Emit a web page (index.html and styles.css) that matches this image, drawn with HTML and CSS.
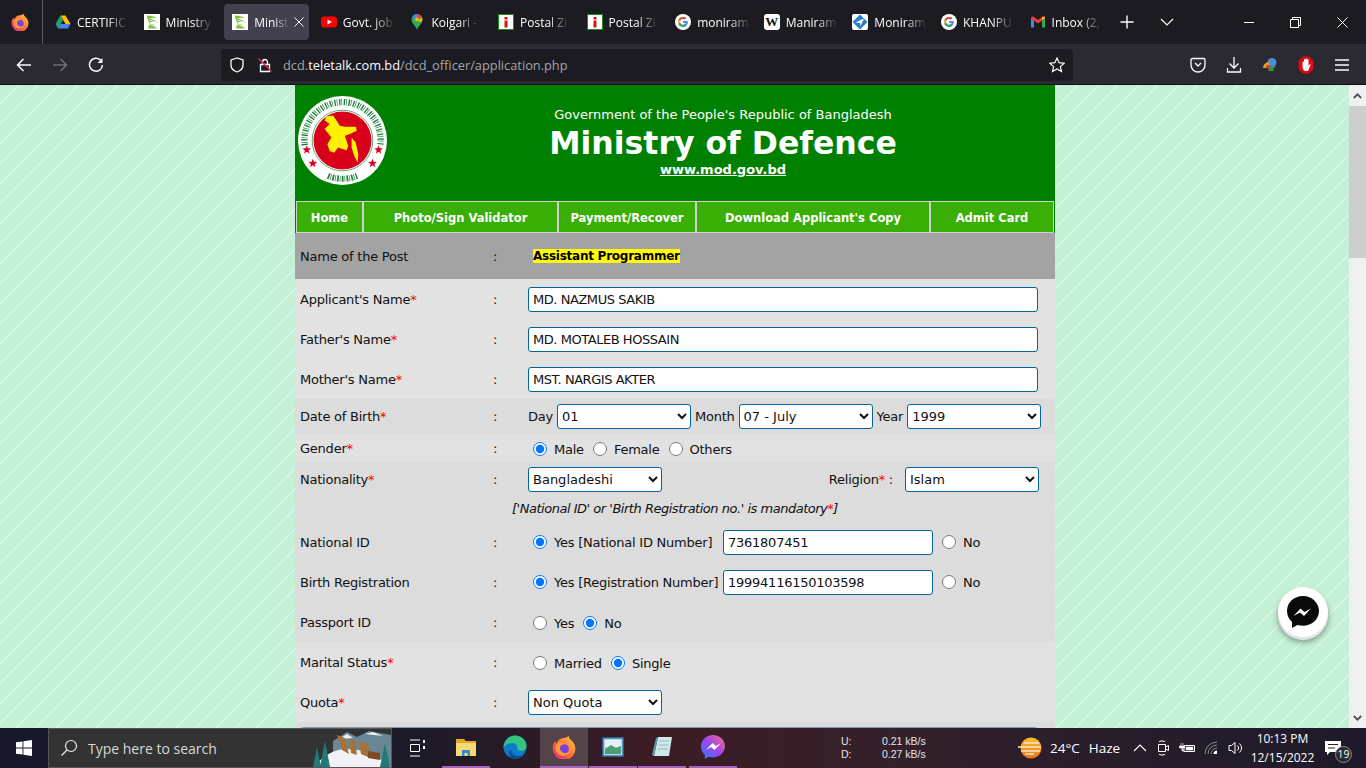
FILE: index.html
```html
<!DOCTYPE html>
<html lang="en">
<head>
    <meta charset="UTF-8">
    <meta name="viewport" content="width=device-width, initial-scale=1.0">
    <title>Ministry of Defence - Application</title>
    <link rel="stylesheet" href="styles.css">
</head>
<body>
    <svg class="sprites" width="0" height="0">
        <defs>
            <linearGradient id="ff-grad" x1="1" y1="0" x2="0" y2="1">
                <stop offset="0" stop-color="#ffd43b"/>
                <stop offset=".5" stop-color="#ff7139"/>
                <stop offset="1" stop-color="#e31587"/>
            </linearGradient>
        </defs>
        <symbol id="fav-firefox" viewBox="0 0 18 18">
            <path d="M12.5 .5c0 1.500 1 2.500 2 3.500 2 2 3 4 3 6.500A8.500 8.500 0 0 1 .5 10c0-2 .7-4 2-5.500 0 1 .5 1.500 1 2 .5-2.500 2-3.500 4-4 2-.5 4-.5 5-2z" fill="url(#ff-grad)"/>
            <circle cx="9" cy="10.500" r="3.600" fill="#7542e5"/>
            <path d="M5 5.500c2-.5 4 .5 4.500 1.500-2 0-3.500 1-3.500 3 0 2.500 2.500 4 5 3.500 1.500-.3 2.500-1 3-2-.5 2.500-3 4-5.500 4-3.500 0-6-2.500-6-5.500 0-2 1-3.500 2.500-4.500z" fill="#ff9a2e"/>
        </symbol>
        <symbol id="fav-mod" viewBox="0 0 16 16">
            <rect width="16" height="16" fill="#fff"/>
            <path d="M3 1.500c4 0 8 1 10 2.500-3-.5-6-.5-7 .5 2 .5 5 2 7 4-3-1-7-1-8 1 3 0 6 1.500 8 5H4c1-2 .5-3.500 1.500-5.500C4 7 3 4 3 1.500z" fill="#7cc142"/>
            <path d="M5 5.500l7 3M5 10l7 3" stroke="#fff" stroke-width=".8"/>
        </symbol>
        <symbol id="fav-postal" viewBox="0 0 16 16">
            <rect x=".5" y=".5" width="15" height="15" fill="#fff" stroke="#1a8c1a"/>
            <rect x="6.500" y="3" width="3" height="2.500" fill="#e01010"/>
            <rect x="6.500" y="6.500" width="3" height="7" fill="#e01010"/>
        </symbol>
        <symbol id="fav-google" viewBox="0 0 16 16">
            <circle cx="8" cy="8" r="8" fill="#fff"/>
            <path d="M12.600 6.900H8v1.900h2.700c-.3 1.200-1.300 2-2.700 2a3 3 0 0 1 0-6c.8 0 1.400.3 1.900.7l1.400-1.400A5 5 0 0 0 8 3a5 5 0 1 0 0 10c2.900 0 4.800-2 4.800-4.900 0-.4-.1-.8-.2-1.200z" fill="#4285f4"/>
            <path d="M3.600 5.600 5.200 6.800A3 3 0 0 1 8 4.800c.8 0 1.400.3 1.900.7l1.400-1.400A5 5 0 0 0 3.600 5.600z" fill="#ea4335"/>
            <path d="M3.600 5.600a5 5 0 0 0 0 4.700l1.600-1.200a3 3 0 0 1 0-2.300z" fill="#fbbc05"/>
            <path d="M3.600 10.300A5 5 0 0 0 8 13c1.300 0 2.400-.4 3.200-1.200l-1.600-1.300c-.4.3-1 .4-1.600.4a3 3 0 0 1-2.800-2z" fill="#34a853"/>
        </symbol>
    </svg>

    <div class="tabbar">
        <div class="ff-cell">
            <svg width="18" height="18"><use href="#fav-firefox"/></svg>
        </div>
        <div class="tabs">
            <div class="tab">
                <svg class="fav" viewBox="0 0 16 16">
                    <path d="M5.500 1.500h5L15.500 10h-5z" fill="#fbbc04"/>
                    <path d="M5.500 1.500 .5 10 3 14.500 8 6z" fill="#1fa463"/>
                    <path d="M3 14.500h10l2.500-4.500H5.500z" fill="#4285f4"/>
                </svg>
                <span class="tab-label">CERTIFIC</span>
            </div>
            <div class="tab">
                <svg class="fav"><use href="#fav-mod"/></svg>
                <span class="tab-label">Ministry</span>
            </div>
            <div class="tab active">
                <svg class="fav"><use href="#fav-mod"/></svg>
                <span class="tab-label">Minist</span>
                <svg class="tab-close" width="10" height="10" viewBox="0 0 10 10"><path d="M.5 .5l9 9M9.500 .5l-9 9" stroke="#fbfbfe" fill="none"/></svg>
            </div>
            <div class="tab">
                <svg class="fav" viewBox="0 0 16 16">
                    <rect y="2.500" width="16" height="11" rx="3" fill="#f00"/>
                    <path d="M6.500 5.500v5L11 8z" fill="#fff"/>
                </svg>
                <span class="tab-label">Govt. job</span>
            </div>
            <div class="tab">
                <svg class="fav" viewBox="0 0 16 16">
                    <path d="M8 0a5.500 5.500 0 0 0-5.500 5.500C2.500 9.500 7 12 8 16c1-4 5.500-6.500 5.500-10.500A5.500 5.500 0 0 0 8 0z" fill="#34a853"/>
                    <path d="M3.500 2.500A5.500 5.500 0 0 1 8 0v3.500a2 2 0 0 0-2 2z" fill="#4285f4"/>
                    <path d="M8 0a5.500 5.500 0 0 1 5 3.500l-3.500 1A2 2 0 0 0 8 3.500z" fill="#ea4335"/>
                    <path d="M13 3.300a5.500 5.500 0 0 1-.8 5.200L9.500 6.500z" fill="#fbbc05"/>
                    <circle cx="8" cy="5.500" r="2" fill="#fbbc05"/>
                </svg>
                <span class="tab-label">Koigari -</span>
            </div>
            <div class="tab">
                <svg class="fav"><use href="#fav-postal"/></svg>
                <span class="tab-label">Postal Zi</span>
            </div>
            <div class="tab">
                <svg class="fav"><use href="#fav-postal"/></svg>
                <span class="tab-label">Postal Zi</span>
            </div>
            <div class="tab">
                <svg class="fav"><use href="#fav-google"/></svg>
                <span class="tab-label">moniram</span>
            </div>
            <div class="tab">
                <span class="fav fav-wiki">W</span>
                <span class="tab-label">Maniram</span>
            </div>
            <div class="tab">
                <svg class="fav" viewBox="0 0 16 16">
                    <rect width="16" height="16" rx="2" fill="#fff"/>
                    <path d="M8 .5 15.500 8 8 15.500 .5 8z" fill="#2a7fc9"/>
                    <path d="M3.500 8.500 12 4.500 8.500 12 8 9z" fill="#fff"/>
                </svg>
                <span class="tab-label">Moniram</span>
            </div>
            <div class="tab">
                <svg class="fav"><use href="#fav-google"/></svg>
                <span class="tab-label">KHANPU</span>
            </div>
            <div class="tab">
                <svg class="fav" viewBox="0 0 16 16">
                    <path d="M1 13.500V4l3 2.300v7.200z" fill="#4285f4"/>
                    <path d="M12 13.500V6.300L15 4v9.500z" fill="#34a853"/>
                    <path d="M1 4.500C1 3 2.500 2 4 3l4 3 4-3c1.500-1 3 0 3 1.500L8 9.500z" fill="#ea4335"/>
                    <path d="M12 6.300 15 4c0-.8-.4-1.500-1-1.700L12 3.500z" fill="#fbbc04"/>
                </svg>
                <span class="tab-label">Inbox (2,</span>
            </div>
        </div>
        <div class="tab-btn">
            <svg width="14" height="14" viewBox="0 0 14 14"><path d="M7 .5v13M.5 7h13" stroke="#fbfbfe" stroke-width="1.400"/></svg>
        </div>
        <div class="tab-btn">
            <svg width="14" height="10" viewBox="0 0 14 10"><path d="M1 2l6 6 6-6" stroke="#fbfbfe" fill="none" stroke-width="1.200"/></svg>
        </div>
        <div class="spacer"></div>
        <div class="win-btn">
            <svg width="10" height="10" viewBox="0 0 10 10"><path d="M0 5.500h10" stroke="#fff"/></svg>
        </div>
        <div class="win-btn">
            <svg width="11" height="11" viewBox="0 0 11 11"><path d="M.5 2.500h8v8h-8zM2.500 2.500v-2h8v8h-2" stroke="#fff" fill="none"/></svg>
        </div>
        <div class="win-btn">
            <svg width="11" height="11" viewBox="0 0 11 11"><path d="M.5 .5l10 10M10.500 .5l-10 10" stroke="#fff" fill="none"/></svg>
        </div>
    </div>

    <div class="toolbar">
        <div class="tool-btn">
            <svg width="16" height="16" viewBox="0 0 16 16"><path d="M15 8H1.500M7.500 2l-6 6 6 6" stroke="#fbfbfe" stroke-width="1.500" fill="none"/></svg>
        </div>
        <div class="tool-btn">
            <svg width="16" height="16" viewBox="0 0 16 16"><path d="M1 8h13.500M8.500 2l6 6-6 6" stroke="#6e6d75" stroke-width="1.500" fill="none"/></svg>
        </div>
        <div class="tool-btn">
            <svg width="16" height="16" viewBox="0 0 16 16"><path d="M13 3.500A6.500 6.500 0 1 0 14.500 8" stroke="#fbfbfe" stroke-width="1.500" fill="none"/><path d="M14.500 1v5h-5z" fill="#fbfbfe"/></svg>
        </div>
        <div class="urlbar">
            <svg class="url-shield" width="16" height="16" viewBox="0 0 16 16"><path d="M8 1 2 3v5c0 3.500 3 6 6 7 3-1 6-3.500 6-7V3z" stroke="#fbfbfe" stroke-width="1.300" fill="none"/></svg>
            <svg class="url-lock" width="16" height="16" viewBox="0 0 16 16">
                <path d="M3.500 7.500h9v7h-9zM5.500 7.500V5a2.500 2.500 0 0 1 5 0v2.500" stroke="#fbfbfe" stroke-width="1.300" fill="none"/>
                <path d="M1.500 1.500l13 13" stroke="#e22850" stroke-width="1.500"/>
            </svg>
            <span class="url-text">dcd.<b>teletalk.com.bd</b>/dcd_officer/application.php</span>
            <svg class="url-star" width="16" height="16" viewBox="0 0 16 16"><path d="M8 1l2.100 4.700 5.100.5-3.800 3.400 1.100 5L8 12l-4.500 2.600 1.100-5L.8 6.200l5.100-.5z" stroke="#fbfbfe" stroke-width="1.200" fill="none"/></svg>
        </div>
        <div class="spacer"></div>
        <div class="tool-btn">
            <svg width="16" height="16" viewBox="0 0 16 16"><path d="M2.500 1.500h11A1.500 1.500 0 0 1 15 3v5a7 7 0 0 1-14 0V3a1.500 1.500 0 0 1 1.500-1.500z" stroke="#fbfbfe" stroke-width="1.300" fill="none"/><path d="M5 6l3 3 3-3" stroke="#fbfbfe" stroke-width="1.300" fill="none"/></svg>
        </div>
        <div class="tool-btn">
            <svg width="16" height="18" viewBox="0 0 16 18"><path d="M8 1v11M3.500 7.500 8 12l4.500-4.500M1.500 12v4h13v-4" stroke="#fbfbfe" stroke-width="1.300" fill="none"/></svg>
        </div>
        <div class="tool-btn">
            <svg width="16" height="16" viewBox="0 0 16 16">
                <circle cx="10" cy="5.500" r="4.500" fill="#4d8fd6"/>
                <path d="M1 11a6 6 0 0 1 6-6v3a3 3 0 0 0-3 3z" fill="#e2a52b"/>
                <path d="M4 11a3 3 0 0 1 3-3l2 2-2 2z" fill="#d8402f"/>
                <path d="M6 14l2-4 6-1-3 3 1 2z" fill="#2f9e3a"/>
            </svg>
        </div>
        <div class="tool-btn">
            <svg width="16" height="18" viewBox="0 0 16 18">
                <path d="M5 .5h6L15.500 5v8L11 17.500H5L.5 13V5z" fill="#e30613"/>
                <path d="M4.500 9V6a.8 .8 0 0 1 1.500 0V3.500a.8 .8 0 0 1 1.500 0V3a.8 .8 0 0 1 1.500 0v.8a.8 .8 0 0 1 1.500 0V10l1-1.500c.6-.6 1.400 0 1 .8L10 15H6.500C5 14 4.500 12 4.500 9z" fill="#fff"/>
            </svg>
        </div>
        <div class="tool-btn">
            <svg width="14" height="12" viewBox="0 0 14 12"><path d="M0 1h14M0 6h14M0 11h14" stroke="#fbfbfe" stroke-width="1.400"/></svg>
        </div>
    </div>

    <div class="viewport">
        <div class="page">
            <div class="sheet">
                <header class="site-head">
                    <svg class="seal" width="89" height="89" viewBox="11 19 264 264">
                        <circle cx="143" cy="151" r="132" fill="#fff"/>
                        <path d="M31 165A113 113 0 1 1 255 165" fill="none" stroke="#1a7f37" stroke-width="19" stroke-dasharray="4 3 2 5"/>
                        <path d="M100 256A113 113 0 0 0 186 256" fill="none" stroke="#1a7f37" stroke-width="18" stroke-dasharray="5 3 2 4"/>
                        <circle cx="143" cy="151" r="90" fill="#fff" stroke="#1a7f37" stroke-width="2"/>
                        <circle cx="143" cy="151" r="86" fill="#d9001b"/>
                        <g transform="translate(0 -8)" fill="#fff200">
                            <path d="M95 88 115 85 125 100 135 115 150 118 183 118 185 130 165 140 150 145 160 175 155 188 130 180 118 195 105 190 98 170 110 150 90 125 105 110 90 100z"/>
                            <path d="M170 150 182 165 190 200 188 225 178 205 170 180z"/>
                        </g>
                        <g fill="#d9001b">
                            <path id="seal-star" d="M37 165l3.500 9 9.500.5-7.500 6 2.500 9.500-8-5.500-8 5.500 2.500-9.500-7.500-6 9.500-.5z"/>
                            <use href="#seal-star" x="213"/>
                            <use href="#seal-star" x="18" y="40"/>
                            <use href="#seal-star" x="195" y="40"/>
                        </g>
                    </svg>
                    <div class="head-text">
                        <div class="gov-line">Government of the People's Republic of Bangladesh</div>
                        <h1>Ministry of Defence</h1>
                        <a class="site-link" href="#">www.mod.gov.bd</a>
                    </div>
                </header>

                <nav class="main-nav">
                    <a href="#">Home</a>
                    <a href="#">Photo/Sign Validator</a>
                    <a href="#">Payment/Recover</a>
                    <a href="#">Download Applicant's Copy</a>
                    <a href="#">Admit Card</a>
                </nav>

                <form>
                    <div class="row row-post">
                        <span class="lbl">Name of the Post</span><span class="colon">:</span>
                        <div class="val"><mark class="post-name">Assistant Programmer</mark></div>
                    </div>
                    <div class="row row-40 light">
                        <span class="lbl">Applicant's Name<i class="req">*</i></span><span class="colon">:</span>
                        <div class="val"><input class="field wide" type="text" value="MD. NAZMUS SAKIB"></div>
                    </div>
                    <div class="row row-40 light">
                        <span class="lbl">Father's Name<i class="req">*</i></span><span class="colon">:</span>
                        <div class="val"><input class="field wide" type="text" value="MD. MOTALEB HOSSAIN"></div>
                    </div>
                    <div class="row row-40 light">
                        <span class="lbl">Mother's Name<i class="req">*</i></span><span class="colon">:</span>
                        <div class="val"><input class="field wide" type="text" value="MST. NARGIS AKTER"></div>
                    </div>
                    <div class="row row-dob dark">
                        <span class="lbl">Date of Birth<i class="req">*</i></span><span class="colon">:</span>
                        <div class="val">
                            <span class="dob-word">Day</span>
                            <select class="field pick"><option>01</option></select>
                            <span class="dob-word">Month</span>
                            <select class="field pick"><option>07 - July</option></select>
                            <span class="dob-word">Year</span>
                            <select class="field pick"><option>1999</option></select>
                        </div>
                    </div>
                    <div class="row row-gender light">
                        <span class="lbl">Gender<i class="req">*</i></span><span class="colon">:</span>
                        <div class="val nudge">
                            <label class="opt"><input type="radio" name="gender" checked>Male</label>
                            <label class="opt"><input type="radio" name="gender">Female</label>
                            <label class="opt"><input type="radio" name="gender">Others</label>
                        </div>
                    </div>
                    <div class="row row-nat dark">
                        <span class="lbl">Nationality<i class="req">*</i></span><span class="colon">:</span>
                        <div class="val">
                            <select class="field pick"><option>Bangladeshi</option></select>
                            <span class="religion">Religion<i class="req">*</i> :</span>
                            <select class="field pick"><option>Islam</option></select>
                        </div>
                    </div>
                    <div class="row-note dark">['National ID' or 'Birth Registration no.' is mandatory<i class="req">*</i>]</div>
                    <div class="row row-40 dark">
                        <span class="lbl">National ID</span><span class="colon">:</span>
                        <div class="val">
                            <label class="opt id-yes"><input type="radio" name="nid" checked>Yes [National ID Number]</label>
                            <input class="field id-num" type="text" value="7361807451">
                            <label class="opt"><input type="radio" name="nid">No</label>
                        </div>
                    </div>
                    <div class="row row-40 dark">
                        <span class="lbl">Birth Registration</span><span class="colon">:</span>
                        <div class="val">
                            <label class="opt id-yes"><input type="radio" name="brn" checked>Yes [Registration Number]</label>
                            <input class="field id-num" type="text" value="19994116150103598">
                            <label class="opt"><input type="radio" name="brn">No</label>
                        </div>
                    </div>
                    <div class="row row-40 dark">
                        <span class="lbl">Passport ID</span><span class="colon">:</span>
                        <div class="val nudge">
                            <label class="opt"><input type="radio" name="pass">Yes</label>
                            <label class="opt"><input type="radio" name="pass" checked>No</label>
                        </div>
                    </div>
                    <div class="row row-40 light">
                        <span class="lbl">Marital Status<i class="req">*</i></span><span class="colon">:</span>
                        <div class="val nudge">
                            <label class="opt"><input type="radio" name="marital">Married</label>
                            <label class="opt"><input type="radio" name="marital" checked>Single</label>
                        </div>
                    </div>
                    <div class="row row-40 light">
                        <span class="lbl">Quota<i class="req">*</i></span><span class="colon">:</span>
                        <div class="val"><select class="field pick"><option>Non Quota</option></select></div>
                    </div>
                    <div class="row-next dark"><div class="next-field"></div></div>
                </form>
            </div>
        </div>

        <div class="scrollbar">
            <div class="sb-arrow">
                <svg width="9" height="6" viewBox="0 0 9 6"><path d="M.8 5 4.500 1.300 8.200 5" stroke="#505050" stroke-width="1.800" fill="none"/></svg>
            </div>
            <div class="sb-thumb"></div>
            <div class="spacer"></div>
            <div class="sb-arrow">
                <svg width="9" height="6" viewBox="0 0 9 6"><path d="M.8 1 4.500 4.700 8.200 1" stroke="#505050" stroke-width="1.800" fill="none"/></svg>
            </div>
        </div>

        <div class="chat-bubble">
            <svg width="34" height="34" viewBox="0 0 34 34">
                <path d="M17 1C8 1 1 7.500 1 16c0 4.500 2 8.300 5 11v6l5.500-3c1.700.5 3.500.7 5.500.7 9 0 16-6.500 16-14.700S26 1 17 1z" fill="#0a0a0a"/>
                <path d="M7.500 21l7-7.500 4 3.500 6.500-3.500-7 7.500-4-3.500z" fill="#fff"/>
            </svg>
        </div>
    </div>

    <div class="taskbar">
        <div class="start">
            <svg width="16" height="16" viewBox="0 0 16 16"><path d="M0 2.300 6.500 1.400v6.200H0zM7.400 1.300 16 0v7.600H7.400zM0 8.400h6.500v6.200L0 13.700zM7.400 8.400H16V16l-8.600-1.300z" fill="#fff"/></svg>
        </div>
        <div class="search">
            <svg width="18" height="18" viewBox="0 0 18 18"><circle cx="11" cy="7" r="5.500" stroke="#e8e8e8" stroke-width="1.200" fill="none"/><path d="M7 11l-5.500 5.500" stroke="#e8e8e8" stroke-width="1.300"/></svg>
            <span class="search-text">Type here to search</span>
            <svg class="search-art" width="78" height="38" viewBox="0 0 78 38">
                <path d="M20 12 34 3l10 5 12-6 22 4v32H20z" fill="#6b8793"/>
                <path d="M26 10l8-5 6 4zM52 5l8-2 10 4z" fill="#eef2f4"/>
                <path d="M0 38c8-8 18-18 34-18s30 6 44 18z" fill="#f1f1f6"/>
                <path d="M24 6l8 3 4 16-7-4zM36 10l6 2 2 14-6-2zM46 12l9 3 2 14-9-4z" fill="#a8713a"/>
                <path d="M55 22l12 2v7l-12-2z" fill="#7b4a22"/>
                <path d="M12 12l5 26H7zM4 18l4 20H0zM72 14l5 24H67z" fill="#1f7a78"/>
            </svg>
        </div>
        <div class="tb-item task-view">
            <svg width="16" height="18" viewBox="0 0 16 18"><path d="M1 1h10M1 17h10M1.500 5.500h9v7h-9z" stroke="#fff" fill="none"/><path d="M14 1h2v3h-2zM14 7h2v3h-2z" fill="#fff"/></svg>
        </div>
        <div class="tb-app tb-running">
            <svg width="22" height="22" viewBox="0 0 22 22">
                <path d="M1 3h8l2 2h10v15H1z" fill="#e2a72e"/>
                <path d="M1 7h20v13H1z" fill="#f8d775"/>
                <path d="M7 20v-6h8v6h-2.500v-3h-3v3z" fill="#2d8dd8"/>
            </svg>
        </div>
        <div class="tb-app">
            <svg width="24" height="24" viewBox="0 0 24 24">
                <circle cx="12" cy="12" r="11.500" fill="#0c7bc9"/>
                <path d="M12 .5C18 .5 23.500 5 23.500 11c0 3-2.500 5-5.500 5-2 0-3.500-1-3.500-2 0-3-1-6-5-6-3 0-7 1.500-9 5C1 6 6 .5 12 .5z" fill="#33c481"/>
                <path d="M8 14c0 4 3 7 7 7 2 0 3.500-.5 5-1.500-2 2.500-5 4-8 4-2 0-3.500-.5-5-1.500-1-2-1-6 1-8z" fill="#0a4f9c"/>
            </svg>
        </div>
        <div class="tb-app tb-running tb-active">
            <svg width="24" height="24"><use href="#fav-firefox"/></svg>
        </div>
        <div class="tb-app tb-running">
            <svg width="22" height="20" viewBox="0 0 22 20">
                <rect x="1" y="1" width="20" height="18" fill="#bcd6e6" stroke="#2b78b5" stroke-width="1.500"/>
                <path d="M3 3h16v7H3z" fill="#e4f0f6"/>
                <path d="M3 12l6-4 5 3 5-2v8H3z" fill="#4f9b74"/>
            </svg>
        </div>
        <div class="tb-app tb-running">
            <svg width="22" height="24" viewBox="0 0 22 24">
                <path d="M7 2h14l-3 19H3z" fill="#cfe8ea"/>
                <path d="M3 21 7 2 5 3 1 20z" fill="#5b9fa8"/>
                <path d="M8 6h10M7.500 10h10M7 14h10" stroke="#8fb6bd"/>
            </svg>
        </div>
        <div class="tb-app tb-running tb-last">
            <svg width="24" height="24" viewBox="0 0 24 24">
                <defs>
                    <linearGradient id="msg-grad" x1="0" y1="1" x2="1" y2="0">
                        <stop offset="0" stop-color="#2b7cff"/>
                        <stop offset=".5" stop-color="#9b46f0"/>
                        <stop offset="1" stop-color="#ff6a7a"/>
                    </linearGradient>
                </defs>
                <path d="M12 0C5.300 0 0 5 0 11.500c0 3.400 1.400 6.300 3.800 8.300V24l4-2.200c1.300.4 2.700.6 4.200.6 6.700 0 12-5 12-11.100S18.700 0 12 0z" fill="url(#msg-grad)"/>
                <path d="M5 15l6.500-7 3.500 3 5-3-6.500 7-3.500-3z" fill="#fff"/>
            </svg>
        </div>
        <div class="spacer"></div>
        <div class="net-meter">
            <div class="net-row"><span class="net-key">U:</span><span>0.21 kB/s</span></div>
            <div class="net-row"><span class="net-key">D:</span><span>0.27 kB/s</span></div>
        </div>
        <div class="weather">
            <svg width="24" height="24" viewBox="0 0 24 24">
                <defs>
                    <linearGradient id="sun-grad" x1="0" y1="0" x2="0" y2="1">
                        <stop offset="0" stop-color="#f9c22e"/>
                        <stop offset="1" stop-color="#e8731c"/>
                    </linearGradient>
                </defs>
                <circle cx="13" cy="12" r="10.500" fill="url(#sun-grad)"/>
                <path d="M6 7h15M0 11h18M9 11h14M3 15h19M7 18h9" stroke="#f3e6c8" stroke-width="1.300"/>
            </svg>
            <span class="temp">24°C</span>
            <span>Haze</span>
        </div>
        <div class="tray">
            <svg class="tray-icon" width="14" height="8" viewBox="0 0 14 8"><path d="M1 7l6-6 6 6" stroke="#fff" fill="none" stroke-width="1.100"/></svg>
            <svg class="tray-icon" width="14" height="18" viewBox="0 0 14 18"><path d="M2.500 5.500h7v7h-7zM9.500 8l3-1.500v5l-3-1.500M3 2.500a8 8 0 0 1 6 0M3 15.500a8 8 0 0 0 6 0" stroke="#fff" fill="none"/></svg>
            <svg class="tray-icon" width="16" height="12" viewBox="0 0 16 12"><path d="M5 3.500h10.500v6H5z" stroke="#fff" fill="none"/><path d="M7 5h7v3H7zM2 1v3M4 1v3M.5 4h5v2H.5zM3 6v3h2" fill="#fff" stroke="#fff" stroke-width=".6"/></svg>
            <svg class="tray-icon" width="15" height="14" viewBox="0 0 15 14"><path d="M1 13A12 12 0 0 1 13 1M4 13a9 9 0 0 1 9-9M7 13a6 6 0 0 1 6-6" stroke="#8d8d92" fill="none"/><path d="M9.500 13a3.500 3.500 0 0 1 3.500-3.500V13z" fill="#fff"/></svg>
            <svg class="tray-icon" width="15" height="14" viewBox="0 0 15 14"><path d="M1 4.500h2.500L7 1.500v11l-3.500-3H1zM9.500 4.500a3.500 3.500 0 0 1 0 5M11.500 2.500a6 6 0 0 1 0 9" stroke="#fff" fill="none"/></svg>
        </div>
        <div class="clock">
            <div>10:13 PM</div>
            <div>12/15/2022</div>
        </div>
        <div class="notif">
            <svg width="18" height="16" viewBox="0 0 18 16"><path d="M1 1h16v11H6l-3 3v-3H1z" fill="#fff"/><path d="M4 4.500h10M4 8h7" stroke="#222"/></svg>
            <span class="notif-count">19</span>
        </div>
    </div>
</body>
</html>
```

FILE: styles.css
```css
* {
    box-sizing: border-box;
}

html, body {
    margin: 0;
    height: 768px;
    overflow: hidden;
}

body {
    display: flex;
    flex-direction: column;
    width: 1366px;
    font-family: "DejaVu Sans", sans-serif;
    font-size: 13px;
    color: #111;
}

.sprites {
    position: absolute;
}

.spacer {
    flex: 1;
}

/* browser tabs */
.tabbar {
    display: flex;
    height: 44px;
    background-color: #1c1b22;
    color: #fbfbfe;
    font-family: "Open Sans", sans-serif;
    font-size: 12px;
}

.ff-cell {
    display: flex;
    align-items: center;
    justify-content: center;
    width: 43px;
    height: 44px;
    padding-right: 2px;
    border-right: 1px solid #5a5a60;
}

.tabs {
    display: flex;
    margin-left: 1px;
}

.tab {
    display: flex;
    align-items: center;
    gap: 6px;
    width: 88.6px;
    height: 36px;
    margin-top: 4px;
    padding-left: 11px;
}

.tab.active {
    width: 85px;
    margin-left: 3px;
    margin-right: .6px;
    padding-left: 8px;
    border-radius: 4px;
    background-color: #42414d;
}

.fav {
    flex: none;
    width: 16px;
    height: 16px;
}

.fav-wiki {
    border-radius: 3px;
    background-color: #fff;
    color: #111;
    font-family: "Liberation Serif", serif;
    font-size: 13px;
    font-weight: bold;
    line-height: 16px;
    text-align: center;
}

.tab-label {
    flex: none;
    white-space: nowrap;
    -webkit-mask-image: linear-gradient(to right, #000 60%, rgba(0, 0, 0, .1));
    mask-image: linear-gradient(to right, #000 60%, rgba(0, 0, 0, .1));
}

.tab-close {
    flex: none;
    margin-left: 0;
}

.tab-btn {
    display: flex;
    align-items: center;
    justify-content: center;
    width: 40px;
}

.win-btn {
    display: flex;
    align-items: center;
    justify-content: center;
    width: 47px;
    height: 44px;
}

/* url row */
.toolbar {
    display: flex;
    align-items: center;
    height: 41px;
    padding: 2px 6px 0;
    background-color: #2b2a33;
    border-bottom: 1px solid #101014;
}

.tool-btn {
    display: flex;
    align-items: center;
    justify-content: center;
    width: 36px;
    height: 32px;
}

.urlbar {
    display: flex;
    align-items: center;
    width: 852px;
    height: 32px;
    margin-left: 107px;
    padding-left: 8px;
    border-radius: 4px;
    background-color: #1c1b22;
    color: #a5a5ab;
    font-family: "Open Sans", sans-serif;
    font-size: 12.8px;
}

.url-lock {
    margin-left: 12px;
}

.url-text {
    margin-left: 10px;
}

.url-text b {
    color: #fbfbfe;
    font-weight: normal;
}

.url-star {
    margin-left: auto;
    margin-right: 8px;
}

/* web page area */
.viewport {
    position: relative;
    display: flex;
    height: 643px;
    overflow: hidden;
}

.page {
    flex: 1;
    padding-left: 1px;
    background: repeating-linear-gradient(135deg, #c4f0d5 0, #c4f0d5 12.6px, #ecfbf1 13.3px, #c4f0d5 14.14px);
}

.sheet {
    width: 760px;
    margin: 0 auto;
}

.site-head {
    display: flex;
    height: 116px;
    padding: 11px 0 0 3px;
    background-color: #008000;
    color: #fff;
}

.seal {
    flex: none;
}

.head-text {
    flex: 1;
    margin-left: 4px;
    text-align: center;
}

.gov-line {
    margin-top: 11px;
    line-height: 16px;
}

h1 {
    margin: 0;
    font-size: 31.5px;
    font-weight: bold;
    line-height: 40px;
}

.site-link {
    display: block;
    color: #fff;
    font-weight: bold;
    line-height: 14px;
}

.main-nav {
    display: grid;
    grid-template-columns: 67px 195px 138px 234px 124px;
    height: 32px;
    padding: 0 1px;
    background-color: #008000;
}

.main-nav a {
    display: flex;
    align-items: center;
    justify-content: center;
    padding-top: 1px;
    border: 1px solid #d0d0d0;
    background-color: #39ae04;
    color: #fff;
    font-size: 11.5px;
    font-weight: bold;
    text-decoration: none;
}

.row {
    display: grid;
    grid-template-columns: 193px 35px 1fr;
    align-items: center;
    padding-left: 5px;
    letter-spacing: -.23px;
}

.row-post {
    height: 46px;
    background-color: #a3a3a3;
}

.row-40 {
    height: 40px;
}

.row-dob {
    height: 35px;
}

.row-gender {
    height: 28px;
}

.row-nat {
    height: 34px;
}

.light {
    background-color: #e2e2e2;
}

.dark {
    background-color: #dcdcdc;
}

.req {
    color: #f00;
    font-style: normal;
}

.post-name {
    margin-left: 5px;
    background-color: #ff0;
    color: #000;
    font-size: 12px;
    font-weight: bold;
    letter-spacing: -.25px;
}

.val {
    display: flex;
    align-items: center;
}

.nudge {
    padding-top: 2px;
}

.field {
    height: 25px;
    padding: 0 4px;
    border: 1px solid #006699;
    border-radius: 3px;
    background-color: #fff;
    color: #111;
    font-family: "DejaVu Sans", sans-serif;
    font-size: 13px;
}

.wide {
    width: 510px;
    letter-spacing: -.45px;
}

.pick {
    width: 134px;
    padding: 0;
}

.dob-word {
    margin-right: 4px;
}

.dob-word ~ .pick {
    margin-right: 4px;
}

.opt {
    display: flex;
    align-items: center;
    margin-right: 4px;
    white-space: nowrap;
}

.opt input {
    width: 14px;
    height: 14px;
    margin: 0 7px 0 5px;
}

.id-yes {
    width: 195px;
    margin-right: 0;
}

.id-num {
    width: 210px;
    margin-right: 4px;
    letter-spacing: -.25px;
}

.religion {
    margin-left: auto;
    margin-right: 12px;
}

.row-nat .val {
    padding-right: 16px;
}

.row-note {
    height: 26px;
    font-style: italic;
    letter-spacing: -.48px;
    line-height: 26px;
    text-align: center;
}

.row-next {
    height: 6px;
    padding: 5px 17px 0 5px;
}

.next-field {
    height: 25px;
    border: 1px solid #7f9fb0;
    border-radius: 3px;
    background-color: #fff;
}

/* page scrollbar */
.scrollbar {
    display: flex;
    flex-direction: column;
    width: 17px;
    background-color: #f0f0f0;
}

.sb-arrow {
    display: flex;
    align-items: center;
    justify-content: center;
    height: 21px;
}

.sb-thumb {
    height: 152px;
    background-color: #cdcdcd;
}

.chat-bubble {
    position: absolute;
    top: 502px;
    left: 1278px;
    display: flex;
    align-items: center;
    justify-content: center;
    width: 50px;
    height: 50px;
    border-radius: 50%;
    background-color: #fff;
    box-shadow: 0 3px 0 #e4e4e4, 0 5px 6px rgba(0, 0, 0, .4);
}

/* windows taskbar */
.taskbar {
    display: flex;
    align-items: center;
    height: 40px;
    padding-right: 20px;
    background: linear-gradient(to right, #17172a 0, #1c1a28 30%, #3c1c24 48%, #33202a 65%, #1e1a2a 100%);
    color: #fff;
    font-family: "Open Sans", sans-serif;
}

.start {
    display: flex;
    align-items: center;
    justify-content: center;
    width: 48px;
    height: 40px;
}

.search {
    display: flex;
    align-items: center;
    width: 344px;
    height: 40px;
    padding-left: 11px;
    background-color: #333;
    border: 1px solid #55555a;
    overflow: hidden;
}

.search-text {
    margin-left: 10px;
    color: #d8d8d8;
    font-size: 14px;
}

.search-art {
    margin-left: auto;
    flex: none;
}

.task-view {
    display: flex;
    justify-content: center;
    width: 50px;
}

.tb-app {
    display: flex;
    align-items: center;
    justify-content: center;
    width: 48px;
    height: 40px;
    margin-right: 1px;
    border-bottom: 2px solid transparent;
}

.tb-running {
    border-bottom-color: #a463c0;
}

.tb-active {
    background-color: #54444a;
}

.tb-last {
    margin-left: 2px;
}

.net-meter {
    width: 177px;
    color: #e6e6e6;
    font-family: "Liberation Sans", sans-serif;
    font-size: 10.5px;
    line-height: 13px;
}

.net-row {
    display: flex;
}

.net-key {
    width: 41px;
}

.weather {
    display: flex;
    align-items: center;
    width: 115px;
    font-size: 13.5px;
    gap: 8px;
}

.temp {
    margin-right: 1px;
}

.tray {
    display: flex;
    align-items: center;
    justify-content: space-between;
    width: 110px;
}

.clock {
    width: 75px;
    margin-left: 2px;
    font-size: 12px;
    line-height: 19px;
    text-align: center;
}

.notif {
    position: relative;
    display: flex;
    justify-content: center;
    width: 26px;
}

.notif-count {
    position: absolute;
    right: -6px;
    top: 6px;
    width: 17px;
    height: 17px;
    border: 1px solid #8a8a8a;
    border-radius: 50%;
    background-color: #2a2a30;
    font-size: 10.5px;
    line-height: 15px;
    text-align: center;
}
```
